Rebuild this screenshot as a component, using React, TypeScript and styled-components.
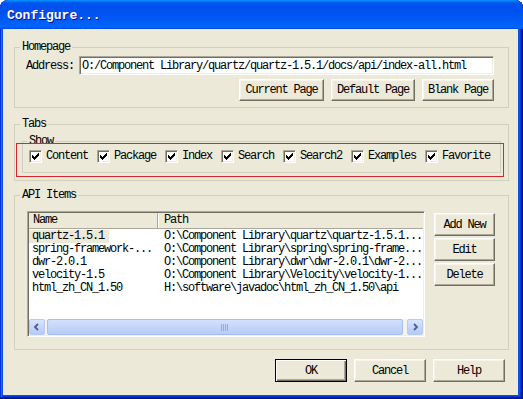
import React from "react";
import styled, { createGlobalStyle } from "styled-components";

const FONT = `"Liberation Mono", "Courier New", monospace`;

const GlobalStyle = createGlobalStyle`
  html, body { margin: 0; padding: 0; background: #ffffff; }
  body { width: 523px; height: 399px; overflow: hidden; }
`;

const Window = styled.div`
  width: 523px;
  height: 399px;
  box-sizing: border-box;
  display: flex;
  flex-direction: column;
  border-radius: 8px 8px 0 0;
  overflow: hidden;
  background: #0855dd;
  box-shadow: inset -1px -1px #00138c, inset 1px 1px #0831d9, inset -2px -2px #001ea0,
    inset 2px 2px #166aee, inset -3px -3px #003bda, inset 3px 3px #0855dd;
  font-family: ${FONT};
  font-size: 12px;
  letter-spacing: -1.2px;
  color: #000;
`;

const TitleBar = styled.div`
  height: 29px;
  flex: none;
  display: flex;
  align-items: center;
  padding: 1px 0 0 7px;
  box-sizing: border-box;
  border-radius: 8px 8px 0 0;
  background: linear-gradient(
    180deg,
    #0997ff 0%,
    #0053ee 10%,
    #0050ee 40%,
    #0062fa 85%,
    #0066ff 92%,
    #005bff 96%,
    #0047e0 100%
  );
`;

const Title = styled.span`
  color: #fff;
  font-weight: bold;
  font-size: 13px;
  letter-spacing: 0;
  text-shadow: 1px 1px #0f1089;
`;

const Body = styled.div`
  flex: 1;
  min-height: 0;
  margin: 0 5px 4px 3px;
  background: #ece9d8;
  padding: 11px 9px 0 11px;
  display: flex;
  flex-direction: column;
`;

const Group = styled.fieldset<{ $mt?: number }>`
  margin: ${(p) => p.$mt ?? 0}px 0 0;
  padding: 0;
  min-width: 0;
  border: 1px solid #d0d0bf;
`;

const Legend = styled.legend<{ $ml?: number }>`
  margin-left: ${(p) => p.$ml ?? 5}px;
  padding: 0 2px;
  height: 14px;
  line-height: 14px;
`;

const HomeInner = styled.div`
  padding: 2px 14px 6px 11px;
`;

const AddressRow = styled.div`
  display: flex;
  align-items: center;
  gap: 5px;
  height: 19px;
`;

const TextInput = styled.input`
  flex: 1;
  min-width: 0;
  height: 19px;
  box-sizing: border-box;
  margin: 0;
  padding: 0 2px;
  background: #fff;
  border: 1px solid;
  border-color: #aca899 #fff #fff #aca899;
  box-shadow: inset 1px 1px #716f64, inset -1px -1px #f1efe2;
  font: inherit;
  letter-spacing: inherit;
  color: #000;
  outline: none;
`;

const ButtonRow = styled.div`
  display: flex;
  justify-content: flex-end;
  gap: 7px;
  margin-top: 4px;
`;

const Button = styled.button<{ $w: number; $h?: number; $default?: boolean }>`
  width: ${(p) => p.$w}px;
  height: ${(p) => p.$h ?? 22}px;
  box-sizing: border-box;
  margin: 0;
  padding: 0;
  background: #ece9d8;
  font: inherit;
  letter-spacing: inherit;
  color: #000;
  border: 1px solid;
  border-color: ${(p) => (p.$default ? "#000" : "#fff #716f64 #716f64 #fff")};
  box-shadow: ${(p) =>
    p.$default
      ? "inset 1px 1px #fff, inset -1px -1px #716f64, inset -2px -2px #aca899"
      : "inset -1px -1px #aca899, inset 1px 1px #f6f4ec"};
  display: flex;
  align-items: center;
  justify-content: center;
`;

const TabsInner = styled.div`
  padding: 3px 7px 7px 7px;
`;

const ShowWrap = styled.div`
  position: relative;
`;

const ShowInner = styled.div`
  display: flex;
  align-items: center;
  gap: 9px;
  padding: 2px 7px 9px 6px;
`;

const CheckItem = styled.label`
  display: flex;
  align-items: center;
  gap: 4px;
  height: 13px;
  line-height: 13px;
  white-space: nowrap;
`;

const CheckBox = styled.span`
  width: 13px;
  height: 13px;
  box-sizing: border-box;
  flex: none;
  background: #fff;
  border: 1px solid;
  border-color: #aca899 #fff #fff #aca899;
  box-shadow: inset 1px 1px #716f64, inset -1px -1px #f1efe2;
  display: flex;
`;

const RedMark = styled.div`
  position: absolute;
  left: -6px;
  right: -3px;
  top: 9px;
  bottom: -4px;
  border: 1px solid #d9262c;
  pointer-events: none;
`;

const ApiInner = styled.div`
  display: flex;
  align-items: flex-start;
  gap: 9px;
  padding: 9px 14px 12px 12px;
`;

const List = styled.div`
  width: 398px;
  height: 126px;
  box-sizing: border-box;
  flex: none;
  background: #fff;
  border: 1px solid;
  border-color: #aca899 #fff #fff #aca899;
  box-shadow: inset 1px 1px #716f64, inset -1px -1px #f1efe2;
  padding: 1px;
  display: flex;
  flex-direction: column;
`;

const HeaderRow = styled.div`
  display: grid;
  grid-template-columns: 129px 1fr;
  height: 16px;
  line-height: 15px;
  background: #ece9d8;
  border-bottom: 1px solid #aca899;
  box-sizing: border-box;
`;

const HeaderCell = styled.div<{ $first?: boolean }>`
  padding-left: ${(p) => (p.$first ? 4 : 5)}px;
  border-right: ${(p) => (p.$first ? "1px solid #aca899" : "none")};
  border-left: ${(p) => (p.$first ? "none" : "1px solid #fff")};
  box-sizing: border-box;
  white-space: nowrap;
  overflow: hidden;
`;

const Rows = styled.div`
  flex: 1;
  padding-top: 1px;
`;

const Row = styled.div`
  display: grid;
  grid-template-columns: 129px 1fr;
  height: 13px;
  line-height: 13px;
  white-space: nowrap;
`;

const NameCell = styled.div`
  overflow: hidden;
`;

const NameText = styled.span<{ $selected?: boolean }>`
  display: inline-block;
  padding: 0 5px 0 3px;
  background: ${(p) => (p.$selected ? "#ece9d8" : "transparent")};
`;

const PathCell = styled.div`
  padding-left: 6px;
  overflow: hidden;
`;

const HScroll = styled.div`
  height: 16px;
  flex: none;
  display: flex;
  background: #f4f3ee;
`;

const ArrowBtn = styled.div`
  width: 16px;
  height: 16px;
  box-sizing: border-box;
  border: 1px solid #b7caf5;
  border-radius: 2px;
  background: linear-gradient(180deg, #d8e4fd 0%, #c3d4fb 60%, #b5c9f7 100%);
  display: flex;
  align-items: center;
  justify-content: center;
`;

const Track = styled.div`
  flex: 1;
  display: flex;
  padding: 0 4px 0 2px;
`;

const Thumb = styled.div`
  flex: 1;
  box-sizing: border-box;
  border: 1px solid #a6bdee;
  border-radius: 2px;
  background: linear-gradient(180deg, #d4e0fc 0%, #c5d5fa 50%, #b9ccf6 100%);
  display: flex;
  align-items: center;
  justify-content: center;
`;

const SideButtons = styled.div`
  display: flex;
  flex-direction: column;
  gap: 2px;
  padding-top: 2px;
`;

const Footer = styled.div`
  display: flex;
  justify-content: flex-end;
  gap: 7px;
  margin-top: 9px;
  padding-right: 4px;
`;

const checkPath =
  "M8 2h1v1h-1z M7 3h2v1h-2z M2 4h1v1h-1z M6 4h3v1h-3z M2 5h2v1h-2z M5 5h3v1h-3z M2 6h5v1h-5z M3 7h3v1h-3z M4 8h1v1h-1z";

const Check = () => (
  <CheckBox>
    <svg width="11" height="11" viewBox="0 0 11 11" shapeRendering="crispEdges">
      <path d={checkPath} fill="#000" />
    </svg>
  </CheckBox>
);

const Chevron = ({ dir }: { dir: "left" | "right" }) => (
  <svg width="8" height="8" viewBox="0 0 8 8">
    <polyline
      points={dir === "left" ? "5,1 2,4 5,7" : "3,1 6,4 3,7"}
      fill="none"
      stroke="#4d6185"
      strokeWidth="1.8"
    />
  </svg>
);

const Grip = () => (
  <svg width="8" height="7" viewBox="0 0 8 7" shapeRendering="crispEdges">
    {[0, 2, 4, 6].map((x) => (
      <rect key={x} x={x} y={0} width={1} height={7} fill="#8eabe8" />
    ))}
  </svg>
);

const tabs = ["Content", "Package", "Index", "Search", "Search2", "Examples", "Favorite"];

const items = [
  { name: "quartz-1.5.1", path: "O:\\Component Library\\quartz\\quartz-1.5.1...", selected: true },
  { name: "spring-framework-...", path: "O:\\Component Library\\spring\\spring-frame..." },
  { name: "dwr-2.0.1", path: "O:\\Component Library\\dwr\\dwr-2.0.1\\dwr-2..." },
  { name: "velocity-1.5", path: "O:\\Component Library\\Velocity\\velocity-1..." },
  { name: "html_zh_CN_1.50", path: "H:\\software\\javadoc\\html_zh_CN_1.50\\api" },
];

export default function App() {
  return (
    <>
      <GlobalStyle />
      <Window>
        <TitleBar>
          <Title>Configure...</Title>
        </TitleBar>
        <Body>
          <Group>
            <Legend>Homepage</Legend>
            <HomeInner>
              <AddressRow>
                <span>Address:</span>
                <TextInput readOnly value="O:/Component Library/quartz/quartz-1.5.1/docs/api/index-all.html" />
              </AddressRow>
              <ButtonRow>
                <Button $w={85}>Current Page</Button>
                <Button $w={84}>Default Page</Button>
                <Button $w={72}>Blank Page</Button>
              </ButtonRow>
            </HomeInner>
          </Group>

          <Group $mt={9}>
            <Legend>Tabs</Legend>
            <TabsInner>
              <ShowWrap>
                <Group>
                  <Legend $ml={4}>Show</Legend>
                  <ShowInner>
                    {tabs.map((t) => (
                      <CheckItem key={t}>
                        <Check />
                        <span>{t}</span>
                      </CheckItem>
                    ))}
                  </ShowInner>
                </Group>
                <RedMark />
              </ShowWrap>
            </TabsInner>
          </Group>

          <Group $mt={7}>
            <Legend>API Items</Legend>
            <ApiInner>
              <List>
                <HeaderRow>
                  <HeaderCell $first>Name</HeaderCell>
                  <HeaderCell>Path</HeaderCell>
                </HeaderRow>
                <Rows>
                  {items.map((it) => (
                    <Row key={it.name}>
                      <NameCell>
                        <NameText $selected={it.selected}>{it.name}</NameText>
                      </NameCell>
                      <PathCell>{it.path}</PathCell>
                    </Row>
                  ))}
                </Rows>
                <HScroll>
                  <ArrowBtn>
                    <Chevron dir="left" />
                  </ArrowBtn>
                  <Track>
                    <Thumb>
                      <Grip />
                    </Thumb>
                  </Track>
                  <ArrowBtn>
                    <Chevron dir="right" />
                  </ArrowBtn>
                </HScroll>
              </List>
              <SideButtons>
                <Button $w={61} $h={23}>Add New</Button>
                <Button $w={61} $h={23}>Edit</Button>
                <Button $w={61} $h={23}>Delete</Button>
              </SideButtons>
            </ApiInner>
          </Group>

          <Footer>
            <Button $w={72} $h={23} $default>OK</Button>
            <Button $w={72} $h={23}>Cancel</Button>
            <Button $w={72} $h={23}>Help</Button>
          </Footer>
        </Body>
      </Window>
    </>
  );
}
